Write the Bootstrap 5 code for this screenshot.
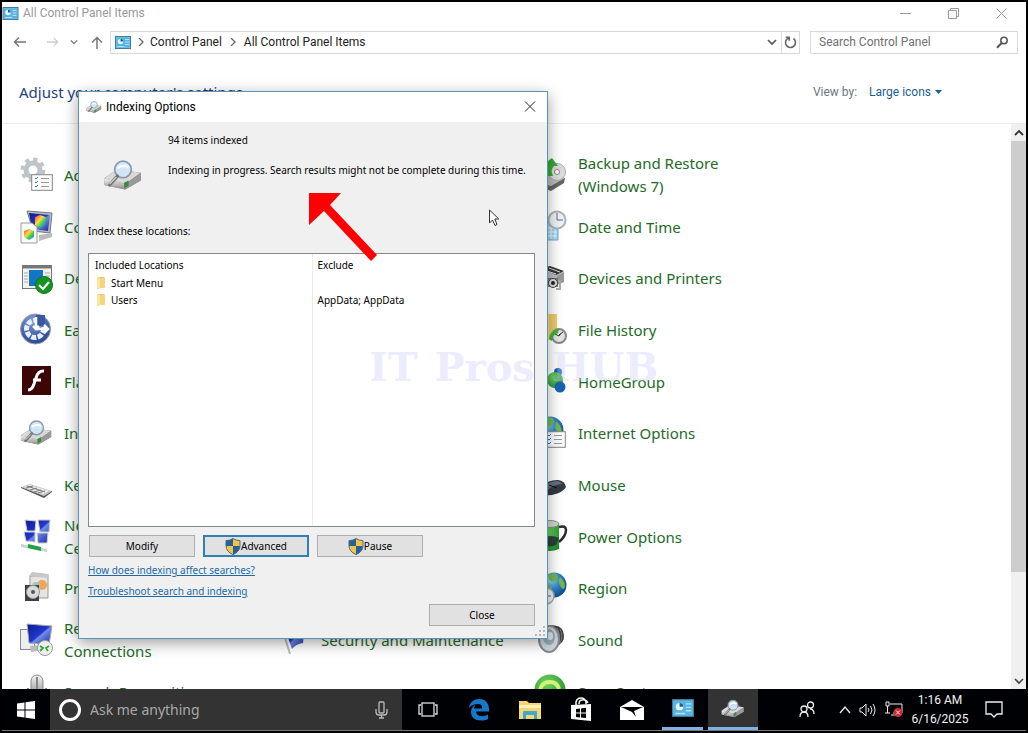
<!DOCTYPE html>
<html lang="en">
<head>
<meta charset="utf-8">
<meta name="viewport" content="width=device-width, initial-scale=1">
<title>All Control Panel Items</title>
<link rel="stylesheet" href="https://cdn.jsdelivr.net/npm/bootstrap@5.3.0/dist/css/bootstrap.min.css">
<style>
body{background:#000;font-family:Roboto,"Open Sans",sans-serif;font-size:12px;line-height:16px;color:#222;padding:2px 2px 0}
svg{display:block;flex:none}
button{border:0;background:none;padding:0;color:inherit}
.win{background:#fff;min-height:0}
.titlebar{height:22px;color:#999;padding-right:1px}
.titlebar .capbtn{width:48px;height:22px}
.navrow{height:22px;margin-top:7px;padding:0 8px 0 11px}
.boxed{border:1px solid #d9d9d9;height:23px}
.search{width:208px;margin-left:10px}
.search input{border:0;outline:0;min-width:0;font-size:12px;color:#444;padding:0}
.search input::placeholder{color:#707070;opacity:1}
.arrows button{height:22px}
.arrows .recent{margin:0 9px 0 11px}
.arrows .up{margin-right:7px}
.crumb-sep{margin:0 6px 0 7px}
.refresh{border-left:1px solid #d9d9d9!important;width:18px;height:21px}
.head{height:71px;padding:8px 68px 0 17px;border-bottom:1px solid #ebebeb}
.head h1{font:15px/22px "Noto Sans",sans-serif;color:#1f3f7a}
.head a{color:#1c5f8f}
.items{padding:25px 0 0 16px}
.colm{display:grid;grid-auto-rows:52px 52px 51px;width:257px;align-content:start;align-items:center}
.colm a{display:flex;align-items:center;gap:10px;color:#1e6b26;text-decoration:none;font:15px/23px "Noto Sans",sans-serif;width:237px}
.colm .low{grid-row:10}
.sbar{width:15px;background:#f0f0f0}
.sbar .btnc{height:17px}
.thumb{background:#cdcdcd;height:431px}
.dlg{position:absolute;left:78px;top:91px;width:470px;background:#f0f0f0;border:1px solid #5b93b5;box-shadow:0 4px 14px rgba(0,0,0,.38);font:10px/16px "Noto Sans",sans-serif;color:#000}
.dlg-title{background:#fff;height:30px;font:12px/16px Roboto,sans-serif;padding:0 10px 0 7px}
.dlg-body{padding:10px 12px 12px 9px}
.status{height:91px}
.status .pic{width:80px;padding:19px 0 0 15px}
.status .msg{margin-top:14px}
.listbox{background:#fff;border:1px solid #828790;height:274px;margin-top:14px}
.listbox table{height:100%;border-collapse:collapse}
.listbox th,.listbox td{font-weight:400;padding:0 0 0 5px;vertical-align:middle;height:17px}
.listbox tr>:first-child{width:223px;border-right:1px solid #ececec;padding-left:6px}
.listbox thead th{height:20px;padding-top:2px}
.listbox .rest td{height:auto}
.wbtn{width:106px;height:22px;background:#e1e1e1;border:1px solid #adadad;font-size:10px;line-height:16px}
.wbtn.default{border:2px solid #2f7fb5}
.btnrow{padding-left:1px}
.links{gap:5px;margin:5px 0}
.dlg-body a{color:#1b6aa8}
.grip{position:absolute;right:1px;bottom:1px}
.mark-text{position:absolute;left:369px;top:343px;font:bold 40px/48px "DejaVu Serif",serif;color:rgba(200,200,248,.36);gap:17px;pointer-events:none}
.red-arrow{position:absolute;left:308px;top:192px}
.cursor{position:absolute;left:488px;top:209px}
.task{height:41px;background:#000104;color:#f2f2f2}
.start{width:48px}
.ask{width:352px;background:#333;padding:0 14px 0 8px}
.ask input{background:none;border:0;outline:0;color:#ddd;font:14px/20px "Noto Sans",sans-serif;min-width:0;padding:0}
.ask input::placeholder{color:#a9a9a9;opacity:1}
.app{width:51px}
.app.run{padding:0 5px}
.app.run span,.app.active{border-bottom:3px solid #7fb2e2}
.app.active{background:#333;width:50px}
.clock{line-height:19px;width:66px}
.tray{padding-right:23px}
.baseline{border-top:1px solid #777;height:3px}
</style>
</head>
<body class="vh-100 d-flex flex-column overflow-hidden">
<svg width="0" height="0" class="position-absolute" aria-hidden="true">
<defs>
<linearGradient id="gGrey" x1="0" y1="0" x2="0" y2="1"><stop offset="0" stop-color="#f4f4f4"/><stop offset="1" stop-color="#8c8c8c"/></linearGradient>
<linearGradient id="gBlue" x1="0" y1="0" x2="1" y2="1"><stop offset="0" stop-color="#0a1a9c"/><stop offset=".5" stop-color="#2338c8"/><stop offset=".55" stop-color="#6f8bea"/><stop offset="1" stop-color="#1424a0"/></linearGradient>
<radialGradient id="gGlobe" cx=".35" cy=".3" r=".8"><stop offset="0" stop-color="#9fdcf7"/><stop offset=".5" stop-color="#2b82c9"/><stop offset="1" stop-color="#0d3d80"/></radialGradient>
<radialGradient id="gGreen" cx=".4" cy=".3" r=".8"><stop offset="0" stop-color="#6fd35f"/><stop offset="1" stop-color="#1c8a2a"/></radialGradient>
<radialGradient id="gEase" cx=".4" cy=".2" r=".9"><stop offset="0" stop-color="#7d9bd8"/><stop offset="1" stop-color="#1d3b8c"/></radialGradient>
<linearGradient id="gRain" x1="0" y1="0" x2="1" y2="1"><stop offset="0" stop-color="#f33"/><stop offset=".4" stop-color="#fd3"/><stop offset=".65" stop-color="#3c6"/><stop offset="1" stop-color="#36f"/></linearGradient>
<symbol id="drive" viewBox="0 0 36 28">
<path d="M1 17 13 9l21 3v7L20 27 1 23z" fill="#777"/><path d="M1 17 13 9l21 3-14 10z" fill="#d9d9d9"/><path d="m1 17 19 5v5L1 23z" fill="url(#gGrey)"/><path d="m20 22 14-10v7l-14 8z" fill="#999"/><path d="m19 21 4-2v5l-4 2z" fill="#3b8a3d"/>
<circle cx="18" cy="9" r="7.500" fill="#cfe6f8" fill-opacity=".95" stroke="#8798a8" stroke-width="1.500"/><path d="M13 8q5-4 10-1" stroke="#fff" stroke-width="2" fill="none"/><path d="m13 15-7 8" stroke="#777" stroke-width="3" stroke-linecap="round"/><path d="m12 16-6 6" stroke="#ddd" stroke-width="1"/>
</symbol>
<symbol id="cpl" viewBox="0 0 16 13"><rect x=".5" y=".5" width="15" height="12" fill="#7cc8ee" stroke="#3f7d9f"/><rect x="1.500" y="1.500" width="13" height="10" fill="#55b4e2"/><circle cx="5.500" cy="5.500" r="2.700" fill="#e9f7ff"/><path d="M5.500 5.500V2.800a2.700 2.700 0 0 1 2.700 2.700z" fill="#1c5f94"/><path d="M10 3.500h4M10 6h4M10 8.500h4M2.500 10.500h7" stroke="#b5e0f6"/></symbol>
<symbol id="shield" viewBox="0 0 16 17"><path d="M8 .6q3 2 7 2v5q0 6-7 9-7-3-7-9v-5q4 0 7-2z" fill="#f0c34a"/><path d="M8 .6V8H1V2.600q4 0 7-2zM8 8h7q0 5.600-7 8.600z" fill="#23609c"/><path d="M8 .6q3 2 7 2v5q0 6-7 9-7-3-7-9v-5q4 0 7-2z" fill="none" stroke="#55657a"/></symbol>
<symbol id="folder" viewBox="0 0 10 14"><path d="M1 1h7l1 1v10H4L1 13z" fill="#e8c662"/><path d="m1 1 3 1v11l-3-1z" fill="#fbe6a0"/><path d="M4 2h5v10H4z" fill="#f3d67d"/></symbol>
<symbol id="chev" viewBox="0 0 10 10"><path d="m1 3 4 4 4-4" fill="none" stroke="currentColor" stroke-width="1.600"/></symbol>
<symbol id="sheet" viewBox="0 0 22 17"><rect x=".7" y=".7" width="20.600" height="15.600" fill="#fdfdfd" stroke="#858585"/><path d="m4 4 1 1 2-2M4 8l1 1 2-2m-3 5 1 1 2-2" stroke="#2b7cc0" fill="none"/><path d="M10 4.500h8M10 8.500h8M10 12.500h8" stroke="#999"/></symbol>
<symbol id="globe" viewBox="0 0 26 26"><circle cx="13" cy="13" r="12.500" fill="url(#gGlobe)"/><path d="M9 2q7-2 8 3-2 4-6 5-5-2-2-8zm10 3q5 4 5 10-2 4-4 0-4-5-1-10zM3 12q6 0 8 4-1 7-4 7-4-4-4-11z" fill="#73b84c"/></symbol>
</defs>
</svg>

<main class="win flex-grow-1 d-flex flex-column overflow-hidden">
<div class="titlebar d-flex align-items-center flex-shrink-0">
<svg width="17" height="13" class="me-1"><use href="#cpl"/></svg><span class="flex-grow-1">All Control Panel Items</span>
<button class="capbtn" aria-label="Minimize"><svg class="m-auto" width="11" height="11"><path d="M0 5.500h11" stroke="#999"/></svg></button>
<button class="capbtn" aria-label="Restore"><svg class="m-auto" width="11" height="11" fill="none" stroke="#999"><path d="M.5 2.500h8v8h-8zM2.500 2.500v-2h8v8h-2"/></svg></button>
<button class="capbtn" aria-label="Close"><svg class="m-auto" width="11" height="11"><path d="m.5.5 10 10m0-10-10 10" stroke="#999"/></svg></button>
</div>
<div class="navrow d-flex align-items-center flex-shrink-0">
<div class="arrows d-flex align-items-center">
<button aria-label="Back"><svg width="14" height="12" fill="none" stroke="#777" stroke-width="1.500"><path d="M13 6H1.500M6 1.500 1.500 6 6 10.500"/></svg></button>
<button class="ms-3 ps-1" aria-label="Forward"><svg width="12" height="12" viewBox="0 0 14 12" fill="none" stroke="#ccc" stroke-width="1.500"><path d="M0 6h12M8 1.500 12.500 6 8 10.500"/></svg></button>
<button class="recent" aria-label="Recent"><svg width="8" height="8" color="#777"><use href="#chev"/></svg></button>
<button class="up ps-1" aria-label="Up"><svg width="12" height="13" fill="none" stroke="#777" stroke-width="1.500"><path d="M6 13V2M1 6.500 6 1.500l5 5"/></svg></button>
</div>
<div class="boxed d-flex align-items-center flex-grow-1">
<svg width="16" height="13" class="ms-1 flex-shrink-0"><use href="#cpl"/></svg>
<svg width="6" height="8" viewBox="0 0 6 8" class="crumb-sep" fill="none" stroke="#666"><path stroke-width="1.300" d="m1 0 4 4-4 4"/></svg>
<span class="text-nowrap">Control Panel</span>
<svg width="6" height="8" viewBox="0 0 6 8" class="mx-2" fill="none" stroke="#666"><path stroke-width="1.300" d="m1 0 4 4-4 4"/></svg>
<span class="flex-grow-1">All Control Panel Items</span>
<button aria-label="History"><svg width="10" height="10" class="me-1" color="#555"><use href="#chev"/></svg></button>
<button class="refresh d-flex align-items-center justify-content-center" aria-label="Refresh"><svg width="13" height="13" fill="none" stroke="#666" stroke-width="1.600"><path d="M9.500 2.500a5 5 0 1 1-5-.6M1.800 1.300h3.400v3.400"/></svg></button>
</div>
<div class="search boxed d-flex align-items-center ps-2 pe-2 flex-shrink-0">
<input class="flex-grow-1" type="text" placeholder="Search Control Panel" aria-label="Search Control Panel">
<svg width="13" height="13" fill="none" stroke="#555"><circle cx="8" cy="4.500" r="3.200" stroke-width="1.500"/><path d="M5.700 7 1 11.700" stroke-width="2"/></svg>
</div>
</div>
<div class="head d-flex align-items-center justify-content-between flex-shrink-0">
<h1 class="m-0">Adjust your computer's settings</h1>
<div class="d-flex gap-2 pe-3"><span class="text-secondary pe-1">View by:</span><a href="#" class="text-decoration-none d-flex align-items-center">Large icons<svg width="7" height="4" class="ms-1"><path d="M0 0h7L3.500 4z" fill="currentColor"/></svg></a></div>
</div>
<div class="d-flex flex-grow-1 overflow-hidden">
<div class="items d-flex flex-grow-1">
<div class="colm">
<a href="#"><svg width="36" height="36"><g transform="translate(15 13)"><circle r="7" fill="none" stroke="#bfc4c9" stroke-width="5"/><circle r="10.500" fill="none" stroke="#bfc4c9" stroke-width="4" stroke-dasharray="4.100 4.140"/></g><use href="#sheet" x="13" y="17" width="22" height="17"/></svg>Administrative Tools</a>
<a href="#"><svg width="36" height="36"><path d="m9 2 25 2-2 20-17-2z" fill="#bbb" stroke="#777"/><path d="m11 4 21 2-2 16-16-2z" fill="url(#gBlue)"/><path d="m17 8 5-2 6 2-1 8-5 3-5-3z" fill="url(#gRain)"/><path d="m21 26 13-2v4l-13 4z" fill="#bbb"/><path d="M3 14h11l5 4v16H3z" fill="#fafafa" stroke="#999"/><path d="m6 22 5-2 5 2v6l-5 3-5-3z" fill="url(#gRain)"/></svg>Color Management</a>
<a href="#"><svg width="36" height="36"><rect x="4.500" y="4.500" width="29" height="23" fill="#f3f3f3" stroke="#777"/><path d="M5 6h28" stroke="#777" stroke-width="3"/><rect x="11" y="9" width="14" height="16" fill="#1475c8"/><path d="M6 12h4M6 15h4M6 18h4M6 21h4M27 12h5M27 15h5" stroke="#aaa"/><circle cx="26" cy="24" r="8.500" fill="#149521" stroke="#0b7817"/><path d="m21 24 4 4 6-7" fill="none" stroke="#fff" stroke-width="2"/></svg>Default Programs</a>
<a href="#"><svg width="36" height="36"><circle cx="17.500" cy="17" r="15" fill="url(#gEase)" stroke="#999"/><circle cx="17" cy="17" r="8.500" fill="none" stroke="#e8eefb" stroke-width="5" stroke-dasharray="5 1.500" stroke-dashoffset="1"/><path d="M18 3h9v11h-9z" fill="#3858a6"/><path d="M18 5v12h12M15 14l3 3 3-3M26 13l4 4-4 4" fill="none" stroke="#fff" stroke-width="2.500"/></svg>Ease of Access Center</a>
<a href="#"><svg width="36" height="36"><rect x="4" y="2" width="29" height="29" fill="#3c0606"/><path d="M26 7q-6-.5-8 7l-2 6q-2 6-6 6M15 16h8" fill="none" stroke="#fff" stroke-width="3"/></svg>Flash Player (32-bit)</a>
<a href="#"><svg width="36" height="36"><use href="#drive" x="2" y="3" width="33" height="27"/></svg>Indexing Options</a>
<a href="#"><svg width="36" height="36"><path d="m3 20 9-3 22 7-8 5z" fill="#c6c8cc"/><path d="m3 20 23 9v2L3 21zM26 29l8-5v1l-8 6z" fill="#555"/><path d="m6 20 6-2 19 6-6 3z" fill="#eee"/><path d="m8 21 7-2m-3 4 7-2m-3 4 7-2m-3 3 7-2M9 19l18 6" stroke="#777"/></svg>Keyboard</a>
<a href="#"><svg width="36" height="36"><g fill="url(#gBlue)" stroke="#ccc"><path d="m7 1 11 1-1 10H9zM20 1h12l-1 12h-9zM6 13h11v10l-9-1zM19 14h11l-1 10h-9z"/></g><path d="m3 25 26 5v3L3 28z" fill="#c8d6cc"/><path d="m10 25 13 3v4l-13-3z" fill="#22a044"/></svg>Network and Sharing Center</a>
<a href="#"><svg width="36" height="36"><path d="M12 5h18v22H12z" fill="#e6e4e0" stroke="#999"/><path d="m11 5 3-4 17 2-1 4z" fill="#c7c7c7"/><circle cx="24" cy="14" r="5" fill="#f0a658"/><circle cx="18" cy="15" r="4" fill="#9ccbb0"/><path d="M7 14h14v16H7z" fill="#3d3f42"/><circle cx="15" cy="21" r="6.500" fill="#d7dbe0" stroke="#999"/><circle cx="15" cy="21" r="2" fill="#555"/></svg>Programs and Features</a>
<a href="#"><svg width="36" height="36"><rect x="2.500" y="7.500" width="14" height="20" fill="#eee" stroke="#888"/><path d="m9 2 25 2-3 19-20-2z" fill="url(#gBlue)" stroke="#aaa"/><path d="m12 24 10-1 4 5-13 2z" fill="#bbb"/><circle cx="27" cy="26" r="7.500" fill="#eee" stroke="#999"/><path d="m22 24 3 2-3 3m9-5-3 2 2 3" fill="none" stroke="#36a336" stroke-width="1.800"/></svg>RemoteApp and Desktop Connections</a>
<a href="#"><svg width="36" height="36"><rect x="13" y="1" width="12" height="22" rx="6" fill="url(#gGrey)" stroke="#888"/><path d="M10 14v6q0 8 9 8t9-8v-6M19 3v18" fill="none" stroke="#888" stroke-width="2"/></svg>Speech Recognition</a>
</div>
<div class="colm">
<a href="#" class="low"><svg width="36" height="36"><path d="M9 4q8 4 13-1 4-2 8 0l-2 18q-7 1-11 6z" fill="url(#gBlue)"/><path d="m7 6 8 26" stroke="#bbb" stroke-width="2"/></svg>Security and Maintenance</a>
<a href="#"><svg width="36" height="36"><path d="m3 6 13-5 16 3v6l-14 6L3 12z" fill="#888"/><path d="m3 6 13-5 16 3-14 6z" fill="#ddd"/><path d="m3 7 15 4v5L3 12z" fill="url(#gGrey)"/><path d="m3 15 15 4 14-5v10l-14 6-15-6z" fill="#777"/><path d="m17 10 3-1v9h-3z" fill="#3b8a3d"/></svg>Storage Spaces</a>
</div>
<div class="colm">
<a href="#"><svg width="36" height="36"><path d="m5 25 14-8 14 4-1 5-13 8-14-5z" fill="#666"/><path d="m5 25 14-8 14 4-14 8z" fill="#bbb"/><circle cx="25" cy="15" r="8.500" fill="#ddd" stroke="#aaa"/><path d="m19 10 6 5 6-5" fill="#eec8d8"/><circle cx="25" cy="15" r="2.500" fill="#fff" stroke="#888"/><path d="M13 19q-1-8 3-13h-3l7-5 6 8h-4q-4 4-1 10z" fill="#33ab35"/></svg>Backup and Restore (Windows 7)</a>
<a href="#"><svg width="36" height="36"><path d="M6 12h20v19H6z" fill="#9fd3ec" stroke="#6fb2d2"/><path d="M7 19h18M7 23h18M7 27h18M11 16v14M15 16v14M19 16v14M23 16v14" stroke="#e5f7ff"/><circle cx="25" cy="11" r="8.500" fill="#eef2f5" stroke="#a9b4bb" stroke-width="2"/><path d="M25 4v7h6" fill="none" stroke="#668"/></svg>Date and Time</a>
<a href="#"><svg width="36" height="36"><path d="m4 9 14-3 14 5v9l-20 3z" fill="#b9bcc0"/><path d="m8 7 10-2 14 5-8 4z" fill="#34383c"/><path d="m12 9 12 4M17 7l11 4" stroke="#ddd"/><path d="m25 15 7-4v10l-7 3z" fill="#999"/><rect x="11" y="17" width="15" height="9" fill="#777"/><circle cx="21" cy="22" r="4.500" fill="#ddd" stroke="#444"/><circle cx="21" cy="22" r="2" fill="#222"/><path d="M26 20h2v8h-4" fill="none" stroke="#aaa" stroke-width="2"/></svg>Devices and Printers</a>
<a href="#"><svg width="36" height="36"><path d="M5 2h20v26H5z" fill="#eecb68"/><path d="M5 2h12v26H5z" fill="#fae39c"/><circle cx="27" cy="24" r="7" fill="#e4e4e4" stroke="#888" stroke-width="2"/><path d="M27 24v-1l4-3m-4 4-4-2" stroke="#333"/><path d="M17 27q1-9 10-10l-1 4q-5 1-6 8z" fill="#3cb43c"/></svg>File History</a>
<a href="#"><svg width="36" height="36"><circle cx="26" cy="8" r="4" fill="#1a62ad"/><circle cx="23" cy="16" r="8" fill="url(#gGreen)"/><circle cx="28" cy="23" r="5.500" fill="#1763b3"/><circle cx="9" cy="18" r="5" fill="#2a9fd4"/></svg>HomeGroup</a>
<a href="#"><svg width="36" height="36"><use href="#globe" x="4" y="0" width="28" height="28"/><use href="#sheet" x="12" y="15" width="22" height="17"/></svg>Internet Options</a>
<a href="#"><svg width="36" height="36"><path d="M6 22q8-9 20-9 7 1 8 7-2 5-14 8-14 1-14-6z" fill="#343a42"/><path d="M8 22q8-8 18-8l5 3q-10 0-16 7z" fill="#66717e"/><path d="m17 18 8 3" stroke="#111"/></svg>Mouse</a>
<a href="#"><svg width="36" height="36"><path d="M8 5h19v25q-9 4-19 0z" fill="url(#gGreen)"/><ellipse cx="17.500" cy="5" rx="9.500" ry="3.500" fill="#cfd8cf" stroke="#888"/><path d="M9 19q10-4 18 0l-3 7q-7 3-15 0z" fill="#263238" opacity=".85"/><path d="M27 8q7-2 7 3 0 6-7 12" fill="none" stroke="#2b2b2b" stroke-width="2.500"/></svg>Power Options</a>
<a href="#"><svg width="36" height="36"><use href="#globe" x="9" y="1" width="26" height="26"/><circle cx="14" cy="25" r="8" fill="#eef2f5" stroke="#a0a8b0" stroke-width="1.500"/><path d="M14 19v6h5" fill="none" stroke="#667"/></svg>Region</a>
<a href="#"><svg width="36" height="36"><path d="M18 3q11 0 13 6 3 9-3 13l-9 7z" fill="#3e3e40"/><path d="M25 6q5 8 0 18M28 7q4 8-1 16" stroke="#777" fill="none"/><ellipse cx="17" cy="17" rx="10" ry="13" fill="#c9d3da" stroke="#888" stroke-width="2"/><ellipse cx="17" cy="15" rx="6" ry="8" fill="#93a6b4"/><ellipse cx="18" cy="14" rx="3" ry="4" fill="#d4e2ea"/></svg>Sound</a>
<a href="#"><svg width="36" height="36"><circle cx="18" cy="16" r="15.500" fill="url(#gGreen)"/><path d="M8 17q1-9 10-9 7 0 9 7" fill="none" stroke="#d4f27a" stroke-width="4"/></svg>Sync Center</a>
</div>
</div>
<div class="sbar flex-shrink-0 d-flex flex-column">
<div class="btnc d-flex align-items-center justify-content-center"><svg width="10" height="10" viewBox="0 0 10 10"><path d="m1 7 4-4 4 4" fill="none" stroke="#333" stroke-width="1.800"/></svg></div>
<div class="thumb"></div>
<div class="btnc mt-auto d-flex align-items-center justify-content-center"><svg width="10" height="10" color="#444"><use href="#chev"/></svg></div>
</div>
</div>
</main>

<footer class="task d-flex align-items-stretch flex-shrink-0">
<button class="start" aria-label="Start"><svg width="18" height="18" viewBox="0 0 18 18" class="m-auto" fill="#fff"><path d="m0 2.500 7.500-1v7H0zM8.500 1.300 18 0v8.500H8.500zM0 9.500h7.500v7L0 15.500zM8.500 9.500H18V18l-9.500-1.300z"/></svg></button>
<div class="ask d-flex align-items-center gap-2">
<svg width="24" height="24" fill="none"><circle cx="12" cy="12" r="9.500" stroke="#fff" stroke-width="3"/></svg>
<input class="flex-grow-1" type="text" placeholder="Ask me anything" aria-label="Ask me anything">
<svg width="13" height="18" fill="none" stroke="#bbb" stroke-width="1.300"><rect x="4" y="1" width="5" height="11" rx="1"/><path d="M1 8v3q0 3 3 3h5q3 0 3-3V8M6.500 14v3M4 17h5"/></svg>
</div>
<button class="app" aria-label="Task View"><svg class="m-auto" width="20" height="15" fill="none" stroke="#ddd" stroke-width="1.300"><rect x="4" y="1" width="12" height="13"/><path d="M3 3H1v9h2M17 3h2v9h-2"/></svg></button>
<button class="app" aria-label="Edge"><svg class="m-auto" width="22" height="23" viewBox="0 0 22 23"><path d="M1 10C2 4 6 1 11.500 1 18 1 21 6 21 11v2.500H8c.3 3 3 4.700 6 4.700 2.300 0 4.300-.6 6-1.600v4.300c-2 1-4.300 1.600-7 1.600-6 0-10-3.500-10-8.500 0-3.500 2-6.300 5-7.500-1.200 1.200-1.900 2.600-2 4h8.200c0-3-1.400-4.400-4.200-4.400C6.500 6.100 3 7.500 1 10z" fill="#1878c8"/></svg></button>
<button class="app" aria-label="File Explorer"><svg class="m-auto" width="24" height="20"><path d="M1 1h8l2 2h12v16H1z" fill="#f6d673"/><path d="M1 5h22v3H1z" fill="#fff0b4"/><path d="M5 19v-7q0-1 1-1h12q1 0 1 1v7h-3v-4H8v4z" fill="#3fa6cf"/></svg></button>
<button class="app" aria-label="Store"><svg class="m-auto" width="22" height="25"><path d="m1 8 20-1v17L1 22z" fill="#fff"/><path d="M6 8V5q1-4 5-4t5 4v2M9 7q0-4 3-4 4-1 6 3" fill="none" stroke="#fff" stroke-width="1.500"/><path d="m6 12 4-.5v4H6zm5-.6 5-.6v4.700h-5zM6 16.500h4v4L6 20zm5 0h5V21l-5-.5z" fill="#000"/></svg></button>
<button class="app" aria-label="Mail"><svg class="m-auto" width="26" height="20"><path d="M1 7 13 0l12 7v13H1z" fill="#fff"/><path d="M2 7h22l-9 4 2 6-4-5z" fill="#000"/></svg></button>
<button class="app run d-flex align-items-stretch" aria-label="Control Panel"><span class="flex-grow-1 d-flex"><svg class="m-auto" width="22" height="18" viewBox="0 0 16 13"><use href="#cpl"/></svg></span></button>
<button class="app active d-flex" aria-label="Indexing Options"><svg class="m-auto" width="24" height="19" viewBox="0 0 36 28"><use href="#drive"/></svg></button>
<div class="tray ms-auto d-flex align-items-center">
<svg width="16" height="17" fill="none" stroke="#eee" stroke-width="1.300"><circle cx="5" cy="8" r="3"/><circle cx="11.500" cy="4" r="3"/><path d="M1 16q0-5 4-5t4 5M11 8q4 0 4 5"/></svg>
<svg class="ms-4" width="12" height="9" fill="none" stroke="#eee" stroke-width="1.300"><path d="m1 8 5-6 5 6"/></svg>
<svg class="ms-2" width="18" height="14" fill="none" stroke="#eee"><path d="M1 5h2l4-4v12L3 9H1zM9 5q2 2 0 4M11.500 3q3 4 0 8M14 1q4 6 0 12"/></svg>
<svg class="ms-2" width="18" height="17" fill="none" stroke="#eee"><path d="M1 1h3v4H1zM2.500 5v7M5 3h12v9H8M6 14h6M0 12h5"/><circle cx="13" cy="11.500" r="4.500" fill="#d12836" stroke="none"/><path d="m11 9.500 4 4m0-4-4 4"/></svg>
<div class="clock text-center ms-1">1:16 AM<br>6/16/2025</div>
<svg class="ms-2 ps-1" width="22" height="18" viewBox="0 0 18 18" fill="none" stroke="#eee" stroke-width="1.300"><path d="M1 1h16v12h-5l-3 3-3-3H1z"/></svg>
</div>
</footer>
<div class="baseline flex-shrink-0"></div>

<section class="dlg" role="dialog" aria-label="Indexing Options">
<div class="dlg-title d-flex align-items-center gap-1">
<svg width="16" height="14" viewBox="0 0 36 28"><use href="#drive"/></svg><span class="flex-grow-1">Indexing Options</span>
<button aria-label="Close dialog"><svg width="14" height="12"><path d="M2 .5 12 10.500M12 .5 2 10.500" stroke="#222"/></svg></button>
</div>
<div class="dlg-body">
<div class="status d-flex">
<div class="pic"><svg width="40" height="32" class="mt-2" viewBox="0 0 36 28"><use href="#drive"/></svg></div>
<div><div>94 items indexed</div><div class="msg text-nowrap">Indexing in progress. Search results might not be complete during this time.</div></div>
</div>
<div>Index these locations:</div>
<div class="listbox">
<table class="w-100">
<thead><tr><th>Included Locations</th><th>Exclude</th></tr></thead>
<tbody>
<tr><td><span class="d-flex gap-1 align-items-center"><svg width="12" height="14" viewBox="0 0 10 14"><use href="#folder"/></svg>Start Menu</span></td><td></td></tr>
<tr><td><span class="d-flex gap-1 align-items-center"><svg width="12" height="14" viewBox="0 0 10 14"><use href="#folder"/></svg>Users</span></td><td>AppData; AppData</td></tr>
<tr class="rest"><td></td><td></td></tr>
</tbody>
</table>
</div>
<div class="btnrow d-flex gap-2 mt-2">
<button class="wbtn">Modify</button>
<button class="wbtn default d-flex align-items-center justify-content-center"><svg width="16" height="17"><use href="#shield"/></svg>Advanced</button>
<button class="wbtn d-flex align-items-center justify-content-center"><svg width="16" height="17"><use href="#shield"/></svg>Pause</button>
</div>
<div class="links d-flex flex-column align-items-start"><a href="#">How does indexing affect searches?</a><a href="#">Troubleshoot search and indexing</a></div>
<div class="text-end"><button class="wbtn">Close</button></div>
</div>
<svg class="grip" width="11" height="11" fill="#b5b5b5"><path d="M8 0h2v2H8zM8 4h2v2H8zM8 8h2v2H8zM4 4h2v2H4zM4 8h2v2H4zM0 8h2v2H0z"/></svg>
</section>
<div class="mark-text d-flex"><span>IT</span><span>Pros</span><span>HUB</span></div>
<svg class="red-arrow" width="72" height="72"><path d="M1 1h32L22 13l47 50-6 6-47-50L1 33z" fill="#f00"/></svg>
<svg class="cursor" width="12" height="18"><path d="M1.500 1v13l3-3 2.500 5.500 2-1L6.800 10h4z" fill="#fff" stroke="#333"/></svg>
<script src="https://cdn.jsdelivr.net/npm/bootstrap@5.3.0/dist/js/bootstrap.bundle.min.js"></script>
</body>
</html>
